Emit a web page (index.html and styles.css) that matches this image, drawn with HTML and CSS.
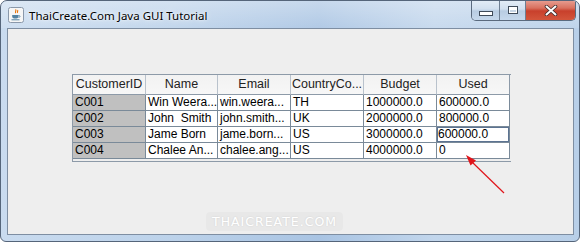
FILE: index.html
```html
<!DOCTYPE html>
<html>
<head>
<meta charset="utf-8">
<link rel="stylesheet" href="styles.css">
</head>
<body>
<div class="window">
  <div class="titlebar">
    <svg class="appicon" width="16" height="16" viewBox="0 0 16 16">
      <rect x="0.5" y="0.5" width="15" height="15" rx="2" fill="#f6f6f6" stroke="#8a98aa"/>
      <path d="M7.5 2.5c1.5 1.2-1 2.2 0.3 3.6M9.5 3.2c1 0.9-0.8 1.6 0.2 2.6" fill="none" stroke="#e76f00" stroke-width="1.1"/>
      <path d="M4.2 8h6.2v1.6c0 1.2-1 2-2 2h-2.2c-1 0-2-0.8-2-2z" fill="#5382a1"/>
      <path d="M10.4 8.6h1c0.8 0 0.8 1.6 0 1.6h-1" fill="none" stroke="#5382a1" stroke-width="0.9"/>
      <path d="M3.5 12.8h8" stroke="#5382a1" stroke-width="1"/>
    </svg>
    <span class="title">ThaiCreate.Com Java GUI Tutorial</span>
    <div class="capbtns">
      <div class="cbtn min"><span class="minico"></span></div>
      <div class="cbtn max"><span class="maxico"></span></div>
      <div class="cbtn close">
        <svg width="14" height="11" viewBox="0 0 14 11">
          <path d="M2.5 1.5l9 8M11.5 1.5l-9 8" stroke="#3b2a2a" stroke-width="3.6" stroke-linecap="round"/>
          <path d="M2.5 1.5l9 8M11.5 1.5l-9 8" stroke="#ffffff" stroke-width="2" stroke-linecap="round"/>
        </svg>
      </div>
    </div>
  </div>
  <div class="content">
    <div class="pane">
      <div class="grid">
        <div class="th">CustomerID</div>
        <div class="th">Name</div>
        <div class="th">Email</div>
        <div class="th">CountryCo...</div>
        <div class="th">Budget</div>
        <div class="th">Used</div>

        <div class="td id">C001</div>
        <div class="td">Win Weera...</div>
        <div class="td">win.weera...</div>
        <div class="td">TH</div>
        <div class="td">1000000.0</div>
        <div class="td">600000.0</div>

        <div class="td id">C002</div>
        <div class="td">John&nbsp; Smith</div>
        <div class="td">john.smith...</div>
        <div class="td">UK</div>
        <div class="td">2000000.0</div>
        <div class="td">800000.0</div>

        <div class="td id">C003</div>
        <div class="td">Jame Born</div>
        <div class="td">jame.born...</div>
        <div class="td">US</div>
        <div class="td">3000000.0</div>
        <div class="td focus">600000.0</div>

        <div class="td id">C004</div>
        <div class="td">Chalee An...</div>
        <div class="td">chalee.ang...</div>
        <div class="td">US</div>
        <div class="td">4000000.0</div>
        <div class="td">0</div>
      </div>
    </div>
    <div class="watermark">THAICREATE.COM</div>
    <svg class="arrow" width="50" height="50" viewBox="0 0 50 50">
      <path d="M44 42L12 11" stroke="#e0141a" stroke-width="1.2"/>
      <path d="M6 4L16 9.5L10.5 14.5z" fill="#e0141a"/>
    </svg>
  </div>
</div>
</body>
</html>
```
FILE: styles.css
```css
html, body {
  margin: 0;
  padding: 0;
  background: #ffffff;
}

.window {
  position: relative;
  width: 580px;
  height: 242px;
  box-sizing: border-box;
  border: 1px solid #55657a;
  border-radius: 7px 7px 6px 6px;
  background: linear-gradient(90deg, #c9dbef 0%, #bcd2ea 30%, #a9c4e3 55%, #c2d6ec 75%, #b8cfe8 100%);
  display: flex;
  flex-direction: column;
  overflow: hidden;
}

.titlebar {
  height: 27px;
  display: flex;
  align-items: center;
  background: linear-gradient(180deg, rgba(255,255,255,0.35) 0%, rgba(255,255,255,0.1) 100%);
}

.appicon {
  margin-left: 7px;
  margin-top: 1px;
  flex: none;
}

.title {
  margin-left: 5px;
  font-family: "Noto Sans", "DejaVu Sans", sans-serif;
  font-size: 11.5px;
  color: #000;
  text-shadow: 0 0 6px rgba(255,255,255,0.9), 0 0 2px rgba(255,255,255,0.9);
  margin-top: 1px;
}

.capbtns {
  margin-left: auto;
  margin-right: 3px;
  align-self: flex-start;
  margin-top: -1px;
  display: flex;
  height: 20px;
  border: 1px solid #5a6a7e;
  border-top: none;
  border-radius: 0 0 5px 5px;
  overflow: hidden;
}

.cbtn {
  height: 20px;
  display: flex;
  align-items: center;
  justify-content: center;
  box-sizing: border-box;
}

.min, .max {
  width: 28px;
  background: linear-gradient(180deg, #e4edf7 0%, #d2e0ef 45%, #b8cce2 55%, #c6d8ec 100%);
  border-right: 1px solid #6e7e92;
}

.max {
  width: 26px;
}

.minico {
  display: block;
  width: 12px;
  height: 3px;
  background: #ffffff;
  border: 1px solid #3f4b5a;
  margin-top: 6px;
}

.maxico {
  display: block;
  width: 8px;
  height: 6px;
  border: 1px solid #3f4b5a;
  box-shadow: inset 0 0 0 1px #ffffff, inset 0 2px 0 1px #ffffff;
  background: #c8d6e6;
}

.close {
  width: 49px;
  background: linear-gradient(180deg, #e8a195 0%, #d9715f 40%, #c8402c 55%, #d3553b 100%);
}

.content {
  position: relative;
  flex: none;
  height: 207px;
  box-sizing: border-box;
  margin: 0 5px 0 6px;
  border: 1px solid #7e8ea2;
  background: #eeeeee;
  padding: 45px 0 0 64px;
}

.pane {
  width: 439px;
  height: 88px;
  box-sizing: border-box;
  border: 1px solid #8d9aa8;
  border-right: none;
  background: #eeeeee;
}

.grid {
  display: grid;
  grid-template-columns: 73px 72px 73px 73px 73px 73px;
  grid-template-rows: 20px 16px 16px 16px 16px;
  font-family: "Liberation Sans", Arial, sans-serif;
  font-size: 12px;
  color: #000;
}

.th {
  box-sizing: border-box;
  border-right: 1px solid #b9c2cc;
  border-bottom: 1px solid #8d9aa8;
  background: linear-gradient(180deg, #f2f2f2 0%, #f7f7f7 100%);
  text-align: center;
  line-height: 19px;
  font-size: 12.5px;
  color: #222;
  white-space: nowrap;
  overflow: hidden;
}

.th:last-child {
  border-right-color: #8d9aa8;
}

.grid .th:nth-child(6) {
  border-right: 1px solid #8d9aa8;
}

.td {
  box-sizing: border-box;
  border-right: 1px solid #7a8a99;
  border-bottom: 1px solid #7a8a99;
  background: #ffffff;
  padding-left: 2px;
  line-height: 15px;
  white-space: nowrap;
  overflow: hidden;
}

.td.id {
  background: #c0c0c0;
}

.td.focus {
  box-shadow: inset 0 0 0 1px #5c7391;
  padding-left: 1px;
}

.watermark {
  position: absolute;
  left: 198px;
  top: 183px;
  padding: 2px 6px;
  border-radius: 4px;
  background: rgba(0, 0, 0, 0.025);
  font-family: "DejaVu Sans", "Noto Sans", sans-serif;
  font-size: 12.5px;
  letter-spacing: 1px;
  color: #ffffff;
  text-shadow: 0 0 2px rgba(0,0,0,0.12);
}

.arrow {
  position: absolute;
  left: 452px;
  top: 122px;
}
```
